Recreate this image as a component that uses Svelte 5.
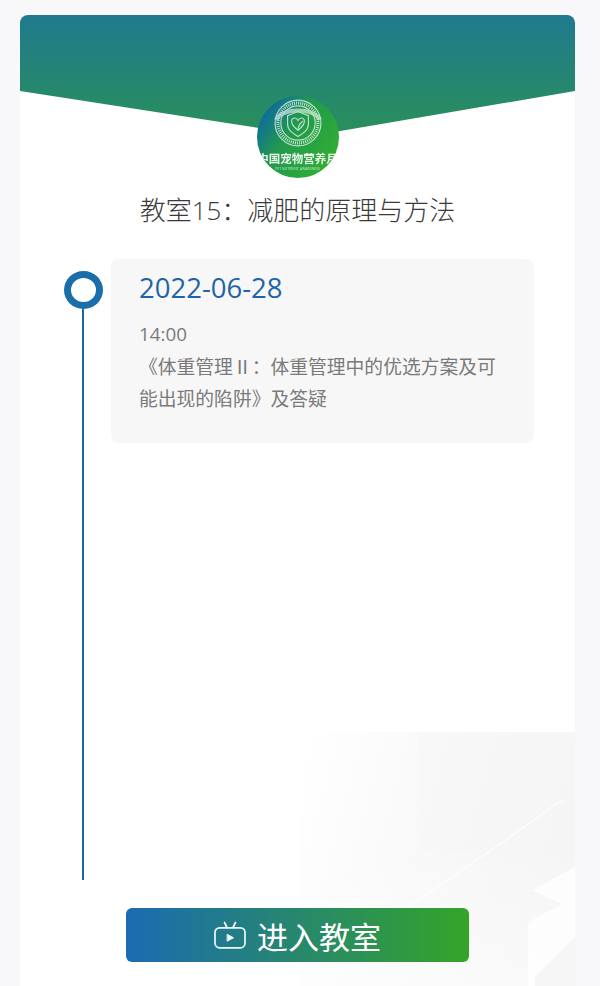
<script>
  const lesson = {
    title: '教室15\uFF1A减肥的原理与方法',
    date: '2022-06-28',
    time: '14:00',
    desc: '《体重管理Ⅱ\uFF1A体重管理中的优选方案及可能出现的陷阱》及答疑'
  };
</script>

<div class="page">
  <main class="card">
    <svg class="decor" viewBox="0 0 275 254" aria-hidden="true">
      <defs>
        <linearGradient id="fade" x1="0" y1="0.1" x2="1" y2="0.35">
          <stop offset="0" stop-color="#f7f7f8" stop-opacity="0" />
          <stop offset="0.4" stop-color="#f7f7f8" stop-opacity="0.7" />
          <stop offset="1" stop-color="#f5f5f6" />
        </linearGradient>
        <linearGradient id="fadeDown" x1="0" y1="0" x2="0" y2="1">
          <stop offset="0" stop-color="#fff" stop-opacity="0" />
          <stop offset="1" stop-color="#fff" stop-opacity="0.75" />
        </linearGradient>
      </defs>
      <rect width="275" height="254" fill="url(#fade)" />
      <rect x="118" y="0" width="157" height="120" fill="#f4f4f5" opacity="0.3" />
      <path d="M0 110 L275 110 L275 254 L0 254 Z" fill="url(#fadeDown)" opacity="0.6" />
      <path d="M262 68 L200 112 L130 160 L100 180" stroke="#fff" stroke-width="1.500" fill="none" opacity="0.8" />
      <path d="M275 135 L275 254 L228 254 L228 190 L262 172 L232 158 Z" fill="#fff" opacity="0.75" />
      <path d="M275 205 L235 245 L235 254 L275 254 Z" fill="#f6f6f7" />
    </svg>

    <div class="hero"></div>

    <div class="logo">
      <svg class="seal" viewBox="0 0 48 48" aria-hidden="true">
        <circle cx="24" cy="24" r="22" />
        <circle cx="24" cy="24" r="16.5" />
        <circle cx="24" cy="24" r="19.2" class="dots" />
        <path class="band" d="M3 21 C8 9 40 9 45 21" />
        <path d="M24 13 L34 17 V25 C34 31 29 34 24 37 C19 34 14 31 14 25 V17 Z" />
        <path d="M24 31 C19 27 17 24 18 21 C19 18.500 22.500 18.500 24 21.500 C25.500 18.500 29 18.500 30 21 C31 24 29 27 24 31 Z" />
        <path d="M24 31 C24 27 26 24 29 22" />
      </svg>
      <span class="logo-name">中国宠物营养月</span>
      <span class="logo-sub">PET NUTRIENT AWARENESS</span>
    </div>

    <h1>{lesson.title}</h1>

    <section class="timeline">
      <div class="rail">
        <span class="dot"></span>
        <span class="line"></span>
      </div>
      <article class="entry">
        <h2>{lesson.date}</h2>
        <p class="time">{lesson.time}</p>
        <p class="desc">{lesson.desc}</p>
      </article>
    </section>

    <button class="enter" type="button">
      <svg viewBox="0 0 32 28" aria-hidden="true">
        <rect x="1" y="6.800" width="30" height="20" rx="4.500" />
        <path d="M10.500 1.500 L13 6.500 M21.500 1.500 L19 6.500" />
        <path class="play" d="M13.500 13.500 L19.500 16.800 L13.500 20 Z" />
      </svg>
      <span>进入教室</span>
    </button>
  </main>
</div>

<style>
  :global(body) {
    margin: 0;
    background: #f8f8fb;
  }

  .page {
    box-sizing: border-box;
    width: 600px;
    height: 986px;
    padding: 15px 25px 0 20px;
    overflow: hidden;
    font-family: "Open Sans", "Noto Sans CJK SC", sans-serif;
  }

  .card {
    position: relative;
    display: flex;
    flex-direction: column;
    align-items: center;
    height: 971px;
    background: #fff;
    border-radius: 8px 8px 0 0;
    overflow: hidden;
  }

  .decor {
    position: absolute;
    right: 0;
    bottom: 0;
    width: 275px;
    height: 254px;
  }

  .hero {
    position: relative;
    align-self: stretch;
    height: 121px;
    flex: none;
    background: linear-gradient(180deg, #1f7a8e 0%, #2a9059 100%);
    clip-path: polygon(0 0, 100% 0, 100% 76px, 291px 121px, 0 76px);
  }

  .logo {
    position: relative;
    flex: none;
    width: 82px;
    height: 82px;
    margin-top: -40px;
    border-radius: 50%;
    background: linear-gradient(125deg, #0a63ad 8%, #20984f 40%, #35b52a 100%);
    display: flex;
    flex-direction: column;
    align-items: center;
    overflow: hidden;
    color: #fff;
    filter: blur(0.4px);
  }

  .seal {
    width: 50px;
    height: 50px;
    margin-top: 2px;
    flex: none;
    opacity: 0.7;
  }

  .seal circle,
  .seal path {
    fill: none;
    stroke: #fff;
    stroke-width: 1.1;
  }

  .seal .dots {
    stroke-width: 3;
    stroke-dasharray: 1 1;
  }

  .seal .band {
    stroke-width: 4;
    opacity: 0.8;
  }

  .logo-name {
    font-size: 11.500px;
    line-height: 14px;
    margin-top: 4px;
    font-weight: 700;
    white-space: nowrap;
    opacity: 0.9;
  }

  .logo-sub {
    font-size: 3.500px;
    line-height: 5px;
    opacity: 0.7;
    white-space: nowrap;
  }

  h1 {
    position: relative;
    margin: 14px 0 0;
    font-size: 26px;
    line-height: 36px;
    font-weight: 300;
    color: #3a3a3a;
  }

  .timeline {
    position: relative;
    display: flex;
    align-self: stretch;
    gap: 8px;
    margin-top: 31px;
    padding-left: 43px;
  }

  .rail {
    display: flex;
    flex-direction: column;
    align-items: center;
    width: 40px;
    height: 609px;
    margin-top: 12px;
  }

  .dot {
    box-sizing: border-box;
    flex: none;
    width: 39px;
    height: 38px;
    border: 7px solid #1a6fab;
    border-radius: 50%;
    background: #fff;
  }

  .line {
    flex: 1;
    width: 2px;
    background: #1f64a6;
  }

  .entry {
    box-sizing: border-box;
    width: 423px;
    height: 184px;
    padding: 8px 28px 0;
    background: #f7f7f7;
    border-radius: 8px;
  }

  h2 {
    margin: 0;
    font-size: 27.500px;
    line-height: 42px;
    font-weight: 400;
    color: #1f64a6;
  }

  .time,
  .desc {
    margin: 0;
    font-size: 18.800px;
    line-height: 32px;
    color: #7a7a7a;
  }

  .time {
    margin: 9px 0 0;
  }

  .desc {
    font-family: "Noto Sans CJK SC", sans-serif;
    font-weight: 400;
  }

  .enter {
    position: relative;
    display: flex;
    align-items: center;
    justify-content: center;
    gap: 11px;
    flex: none;
    width: 343px;
    height: 54px;
    margin-top: 28px;
    padding: 0;
    border: 0;
    border-radius: 6px;
    background: linear-gradient(90deg, #1b6bb2 0%, #34a428 100%);
    color: #fff;
    font: inherit;
    font-size: 31px;
  }

  .enter svg {
    width: 32px;
    height: 28px;
    flex: none;
  }

  .enter svg rect,
  .enter svg path {
    fill: none;
    stroke: #eafafa;
    stroke-width: 1.700;
    stroke-linecap: round;
  }

  .enter svg .play {
    fill: #fff;
    stroke-width: 1;
    stroke-linejoin: round;
  }
</style>
